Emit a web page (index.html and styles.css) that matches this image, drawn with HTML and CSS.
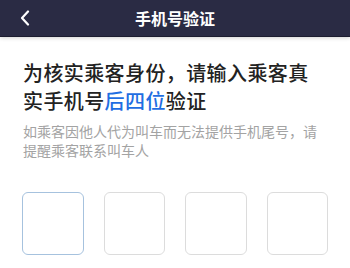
FILE: index.html
```html
<!DOCTYPE html>
<html lang="zh-CN">
<head>
<meta charset="utf-8">
<link rel="stylesheet" href="styles.css">
</head>
<body>
<header class="topbar">
  <span class="back">
    <svg width="10" height="16" viewBox="0 0 10 16"><polyline points="8,1.5 2,8 8,14.5" fill="none" stroke="#fff" stroke-width="2.2" stroke-linecap="round" stroke-linejoin="round"/></svg>
  </span>
  <h1 class="title">手机号验证</h1>
</header>
<main class="content">
  <h2 class="heading">为核实乘客身份，请输入乘客真实手机号<span class="hl">后四位</span>验证</h2>
  <p class="note">如乘客因他人代为叫车而无法提供手机尾号，请提醒乘客联系叫车人</p>
  <div class="codes">
    <div class="box active"></div>
    <div class="box"></div>
    <div class="box"></div>
    <div class="box"></div>
  </div>
</main>
</body>
</html>
```
FILE: styles.css
```css
html, body {
  margin: 0;
  padding: 0;
  background: #fff;
  font-family: "Noto Sans CJK SC", "Noto Sans", sans-serif;
}
.topbar {
  position: relative;
  height: 36px;
  background: #2a2b44;
  border-bottom: 1px solid #1c1d30;
  box-shadow: 0 1px 4px rgba(0,0,0,0.18);
  display: flex;
  align-items: center;
  justify-content: center;
}
.back {
  position: absolute;
  left: 20px;
  top: 10px;
  display: flex;
}
.title {
  margin: 0;
  color: #fff;
  font-size: 16px;
  font-weight: bold;
  line-height: 36px;
}
.content {
  padding: 22px 23px 0 23px;
}
.heading {
  margin: 0;
  font-size: 20px;
  letter-spacing: 0.4px;
  line-height: 28px;
  font-weight: 500;
  color: #222;
}
.hl {
  color: #1f6ee2;
}
.note {
  margin: 7px 0 0 0;
  font-size: 14px;
  line-height: 19px;
  color: #a3a3a3;
}
.codes {
  margin: 32px -1px 0 -1px;
  display: grid;
  grid-template-columns: repeat(4, 1fr);
  gap: 20px;
}
.box {
  height: 61px;
  border: 1px solid #dcdcdc;
  border-radius: 6px;
}
.box.active {
  border-color: #a6c2de;
}
```
